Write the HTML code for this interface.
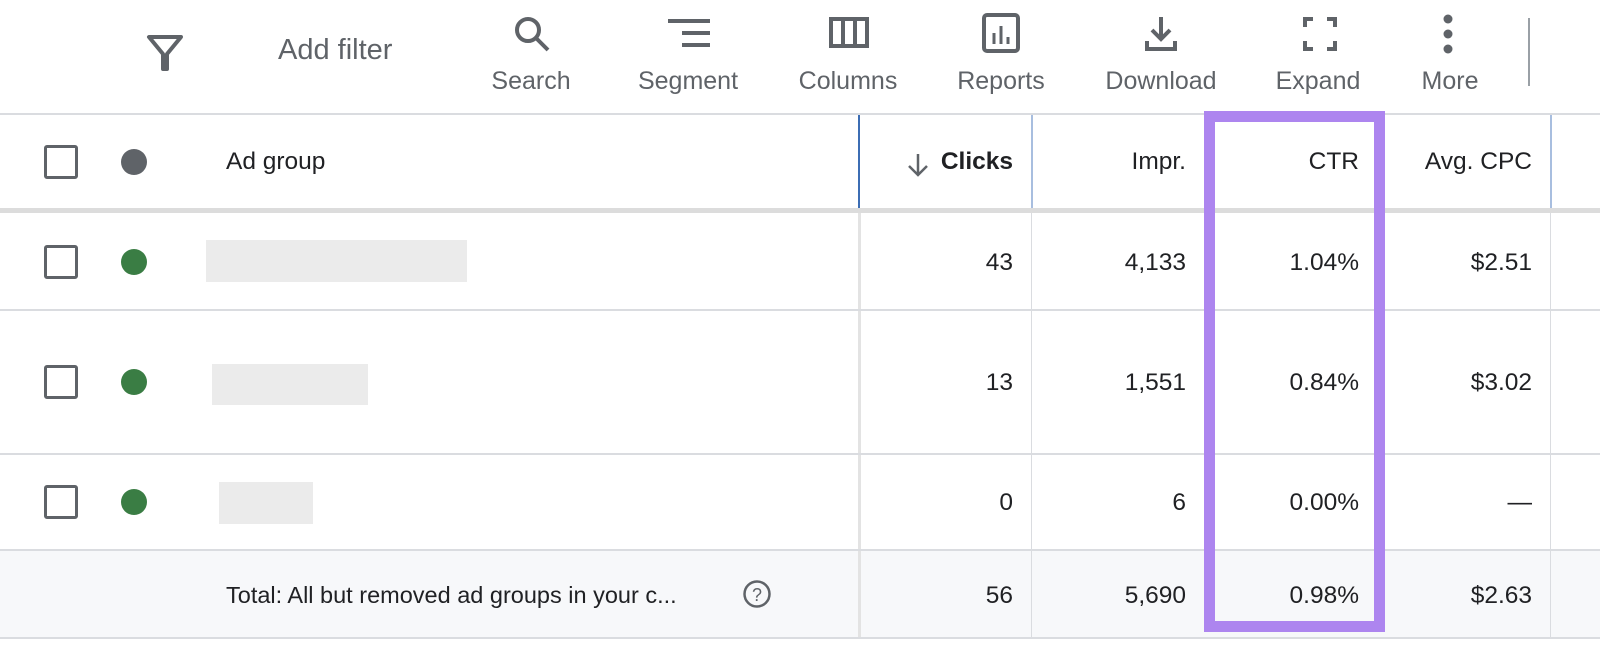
<!DOCTYPE html>
<html><head><style>
*{margin:0;padding:0;box-sizing:border-box}
body{width:1600px;height:653px;background:#fff;position:relative;overflow:hidden;font-family:"Liberation Sans",Arial,sans-serif;color:#202124}
.a{position:absolute}
.lbl{position:absolute;top:67px;font-size:25px;color:#5f6368;text-align:center;width:160px;margin-left:-80px}
.hl{position:absolute;left:0;width:1600px;background:#dadce0}
.vl{position:absolute;width:1px;background:#dadce0}
.num{position:absolute;font-size:24.5px;text-align:right;width:200px;color:#202124}
.cb{position:absolute;left:44px;width:34px;height:34px;border:3px solid #5f6368;border-radius:3px}
.dot{position:absolute;left:121px;width:26px;height:26px;border-radius:50%;background:#3a7d44}
.ph{position:absolute;background:#ebebeb}
</style></head><body>
<svg class="a" style="left:146px;top:34px" width="38" height="38" viewBox="0 0 38 38"><path d="M3 3H35L21 20V35H17V20Z" fill="none" stroke="#5f6368" stroke-width="4" stroke-linejoin="round"/></svg>
<div class="a" style="left:278px;top:34px;font-size:29px;color:#5f6368">Add filter</div>
<svg class="a" style="left:512px;top:14px" width="40" height="40"><circle cx="16" cy="16" r="11" fill="none" stroke="#5f6368" stroke-width="4"/><path d="M24 24L36 36" stroke="#5f6368" stroke-width="4"/></svg>
<div class="lbl" style="left:531px">Search</div>
<svg class="a" style="left:668px;top:18px" width="44" height="32"><path d="M0 3H42M14 15H42M14 27H42" stroke="#5f6368" stroke-width="4"/></svg>
<div class="lbl" style="left:688px">Segment</div>
<svg class="a" style="left:829px;top:17px" width="40" height="32"><rect x="2" y="2" width="36" height="27" fill="none" stroke="#5f6368" stroke-width="4"/><path d="M14 2V29M26 2V29" stroke="#5f6368" stroke-width="4"/></svg>
<div class="lbl" style="left:848px">Columns</div>
<svg class="a" style="left:982px;top:13px" width="40" height="40"><rect x="2" y="2" width="34" height="36" rx="3" fill="none" stroke="#5f6368" stroke-width="4"/><path d="M12 20V31M19 13V31M26 24V31" stroke="#5f6368" stroke-width="3"/></svg>
<div class="lbl" style="left:1001px">Reports</div>
<svg class="a" style="left:1144px;top:15px" width="36" height="38"><path d="M17 2V24M8 15L17 24L26 15" fill="none" stroke="#5f6368" stroke-width="4"/><path d="M3 26V34H31V26" fill="none" stroke="#5f6368" stroke-width="4"/></svg>
<div class="lbl" style="left:1161px">Download</div>
<svg class="a" style="left:1303px;top:17px" width="34" height="34"><path d="M2 10V2H10M24 2H32V10M32 24V32H24M10 32H2V24" fill="none" stroke="#5f6368" stroke-width="4"/></svg>
<div class="lbl" style="left:1318px">Expand</div>
<svg class="a" style="left:1440px;top:14px" width="16" height="40"><circle cx="8" cy="5" r="4.5" fill="#5f6368"/><circle cx="8" cy="20" r="4.5" fill="#5f6368"/><circle cx="8" cy="35" r="4.5" fill="#5f6368"/></svg>
<div class="lbl" style="left:1450px">More</div>
<div class="a" style="left:1528px;top:18px;width:2px;height:68px;background:#9aa0a6"></div>
<div class="hl" style="top:113px;height:2px"></div>
<div class="cb" style="top:145px"></div>
<div class="dot" style="top:149px;background:#5f6368"></div>
<div class="a" style="left:226px;top:148px;font-size:24.5px">Ad group</div>
<svg class="a" style="left:905px;top:152px" width="26" height="26"><path d="M13 2V23M4 14L13 23L22 14" fill="none" stroke="#5f6368" stroke-width="2.5"/></svg>
<div class="num" style="left:813px;top:148px;font-weight:bold">Clicks</div>
<div class="num" style="left:986px;top:148px">Impr.</div>
<div class="num" style="left:1159px;top:148px">CTR</div>
<div class="num" style="left:1332px;top:148px">Avg. CPC</div>
<div class="a" style="left:858px;top:115px;width:2px;height:94px;background:#3c6db4"></div>
<div class="a" style="left:1031px;top:115px;width:2px;height:94px;background:#a8bedf"></div>
<div class="a" style="left:1550px;top:115px;width:2px;height:94px;background:#a8bedf"></div>
<div class="hl" style="top:208px;height:5px;background:#dcdcdc"></div>
<div class="vl" style="left:858px;top:213px;height:425px;width:3px;background:#e3e3e3"></div>
<div class="vl" style="left:1031px;top:213px;height:425px"></div>
<div class="vl" style="left:1204px;top:213px;height:425px"></div>
<div class="vl" style="left:1377px;top:213px;height:425px"></div>
<div class="vl" style="left:1550px;top:213px;height:425px"></div>
<div class="cb" style="top:245px"></div><div class="dot" style="top:249px"></div>
<div class="ph" style="left:206px;top:240px;width:261px;height:42px"></div>
<div class="num" style="left:813px;top:249px">43</div><div class="num" style="left:986px;top:249px">4,133</div><div class="num" style="left:1159px;top:249px">1.04%</div><div class="num" style="left:1332px;top:249px">$2.51</div>
<div class="hl" style="top:309px;height:2px"></div>
<div class="cb" style="top:365px"></div><div class="dot" style="top:369px"></div>
<div class="ph" style="left:212px;top:364px;width:156px;height:41px"></div>
<div class="num" style="left:813px;top:369px">13</div><div class="num" style="left:986px;top:369px">1,551</div><div class="num" style="left:1159px;top:369px">0.84%</div><div class="num" style="left:1332px;top:369px">$3.02</div>
<div class="hl" style="top:453px;height:2px"></div>
<div class="cb" style="top:485px"></div><div class="dot" style="top:489px"></div>
<div class="ph" style="left:219px;top:482px;width:94px;height:42px"></div>
<div class="num" style="left:813px;top:489px">0</div><div class="num" style="left:986px;top:489px">6</div><div class="num" style="left:1159px;top:489px">0.00%</div><div class="num" style="left:1332px;top:489px">—</div>
<div class="hl" style="top:549px;height:2px"></div>
<div class="a" style="left:0;top:551px;width:1600px;height:87px;background:#f7f8fa"></div>
<div class="vl" style="left:858px;top:551px;height:87px;width:3px;background:#e3e3e3"></div>
<div class="vl" style="left:1031px;top:551px;height:87px"></div>
<div class="vl" style="left:1550px;top:551px;height:87px"></div>
<div class="a" style="left:226px;top:582px;font-size:23.5px">Total: All but removed ad groups in your c...</div>
<svg class="a" style="left:742px;top:579px" width="30" height="30"><circle cx="15" cy="15" r="12.5" fill="none" stroke="#5f6368" stroke-width="2.5"/><text x="15" y="22" text-anchor="middle" font-size="18" font-family="Liberation Sans" fill="#5f6368">?</text></svg>
<div class="num" style="left:813px;top:582px">56</div><div class="num" style="left:986px;top:582px">5,690</div><div class="num" style="left:1159px;top:582px">0.98%</div><div class="num" style="left:1332px;top:582px">$2.63</div>
<div class="hl" style="top:637px;height:2px"></div>
<div class="a" style="left:1204px;top:111px;width:181px;height:521px;border:11px solid #ad85ef"></div>
</body></html>
